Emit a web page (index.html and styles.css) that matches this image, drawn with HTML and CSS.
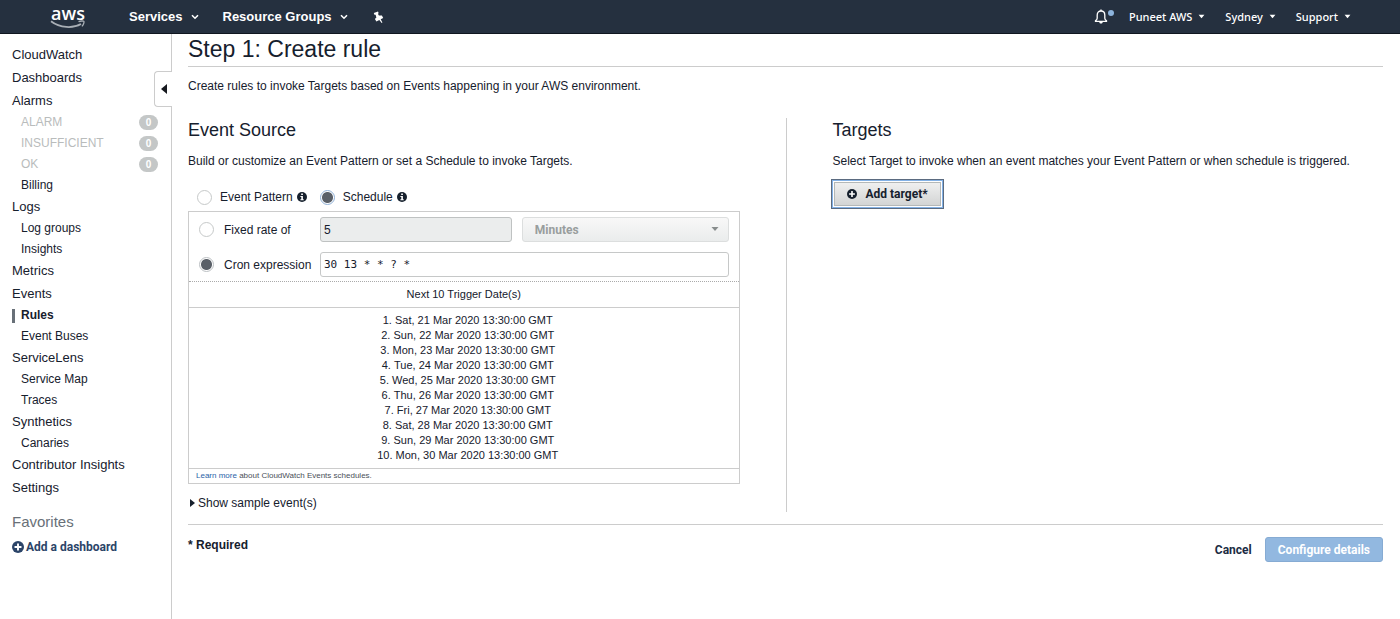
FILE: index.html
```html
<!DOCTYPE html>
<html lang="en">
<head>
<meta charset="utf-8">
<title>CloudWatch - Create rule</title>
<link rel="stylesheet" href="styles.css">
</head>
<body>
<svg class="sprite" aria-hidden="true">
  <symbol id="chevron" viewBox="0 0 8 6"><path d="M1 1.2l3 3 3-3" fill="none" stroke="currentColor" stroke-width="1.6"/></symbol>
  <symbol id="caret" viewBox="0 0 8 6"><path d="M.5 1h7L4 5z" fill="currentColor"/></symbol>
  <symbol id="info" viewBox="0 0 10 10"><circle cx="5" cy="5" r="5" fill="currentColor"/><path d="M4.2 1.5h1.7v1.5H4.2zM3.4 4h2.5v3.2h.8v1.1H3.4V7.2h.9V5h-.9z" fill="#fff"/></symbol>
  <symbol id="plus" viewBox="0 0 10 10"><circle cx="5" cy="5" r="5" fill="currentColor"/><path d="M4.2 2.1h1.6v2.1h2.1v1.6H5.8v2.1H4.2V5.8H2.1V4.2h2.1z" fill="#fff"/></symbol>
</svg>
<header class="topbar">
  <a class="logo" href="#" aria-label="AWS home">
    <span class="logo-text">aws</span>
    <svg class="logo-smile" viewBox="0 0 36 9"><path d="M1 1.200C10 8.200 23 8.600 31 4" fill="none" stroke="#a9afb6" stroke-width="1.800"/><path d="M28.500 1.700c2-.9 5-.9 5.400-.3s-.3 3.300-2 5" fill="none" stroke="#a9afb6" stroke-width="1.300"/></svg>
  </a>
  <nav class="menu">
    <button class="menu-item" type="button">Services <svg class="chevron"><use href="#chevron"/></svg></button>
    <button class="menu-item" type="button">Resource Groups <svg class="chevron"><use href="#chevron"/></svg></button>
    <button class="menu-item" type="button" aria-label="Pin shortcuts"><svg class="pin" viewBox="0 0 12 12"><path d="M1.800 2L6 .4l.7 1.800-.8.5 1 1.800 3-.1 1.300 2.600-2.500 1.200 1.700 3.400-.7.300-2.400-2.900-2.900 1.600L2.900 8l1.500-1.500-.8-2.800-1.200.1z" fill="#fff"/></svg></button>
  </nav>
  <nav class="account">
    <button class="bell" type="button" aria-label="Notifications"><svg class="bell-icon" viewBox="0 0 14 16"><path d="M7 2c2.500 0 3.800 1.800 3.800 4v3.200c0 1 .7 1.700 1.700 2.600v.6h-11v-.6c1-.9 1.700-1.600 1.700-2.600V6C3.200 3.800 4.500 2 7 2z" fill="none" stroke="#fff" stroke-width="1.300"/><path d="M6.300.6h1.400V2H6.300zM5.300 13h3.400c0 2-3.400 2-3.400 0z" fill="#fff"/></svg><span class="bell-dot"></span></button>
    <button class="account-item" type="button">Puneet AWS <svg class="caret"><use href="#caret"/></svg></button>
    <button class="account-item" type="button">Sydney <svg class="caret"><use href="#caret"/></svg></button>
    <button class="account-item" type="button">Support <svg class="caret"><use href="#caret"/></svg></button>
  </nav>
</header>
<div class="layout">
  <aside class="sidebar">
    <button class="collapse" type="button" aria-label="Collapse navigation"><svg class="collapse-icon" viewBox="0 0 6 10"><path d="M6 0v10L0 5z" fill="#16191f"/></svg></button>
    <ul class="nav">
      <li><a href="#">CloudWatch</a></li>
      <li><a href="#">Dashboards</a></li>
      <li><a href="#">Alarms</a>
        <ul class="subnav">
          <li class="muted"><a href="#">ALARM</a><span class="badge">0</span></li>
          <li class="muted"><a href="#">INSUFFICIENT</a><span class="badge">0</span></li>
          <li class="muted"><a href="#">OK</a><span class="badge">0</span></li>
          <li><a href="#">Billing</a></li>
        </ul></li>
      <li><a href="#">Logs</a>
        <ul class="subnav">
          <li><a href="#">Log groups</a></li>
          <li><a href="#">Insights</a></li>
        </ul></li>
      <li><a href="#">Metrics</a></li>
      <li><a href="#">Events</a>
        <ul class="subnav">
          <li class="current"><a href="#" aria-current="page">Rules</a></li>
          <li><a href="#">Event Buses</a></li>
        </ul></li>
      <li><a href="#">ServiceLens</a>
        <ul class="subnav">
          <li><a href="#">Service Map</a></li>
          <li><a href="#">Traces</a></li>
        </ul></li>
      <li><a href="#">Synthetics</a>
        <ul class="subnav">
          <li><a href="#">Canaries</a></li>
        </ul></li>
      <li><a href="#">Contributor Insights</a></li>
      <li><a href="#">Settings</a></li>
    </ul>
    <h2 class="favorites">Favorites</h2>
    <a class="add-dashboard" href="#"><svg class="plus"><use href="#plus"/></svg>Add a dashboard</a>
  </aside>
  <main class="main">
    <h1>Step 1: Create rule</h1>
    <p class="intro">Create rules to invoke Targets based on Events happening in your AWS environment.</p>
    <div class="columns">
      <section class="source">
        <h2>Event Source</h2>
        <p class="lead">Build or customize an Event Pattern or set a Schedule to invoke Targets.</p>
        <div class="modes">
          <label class="choice"><input type="radio" name="mode">Event Pattern <svg class="info"><use href="#info"/></svg></label>
          <label class="choice"><input class="focused" type="radio" name="mode" checked>Schedule <svg class="info"><use href="#info"/></svg></label>
        </div>
        <div class="schedule">
          <div class="fields">
            <label class="choice"><input type="radio" name="kind">Fixed rate of</label>
            <input class="field" type="text" value="5" aria-label="Rate" disabled>
            <div class="select-wrap">
              <select class="unit" aria-label="Rate unit" disabled><option>Minutes</option></select>
              <svg class="unit-caret"><use href="#caret"/></svg>
            </div>
            <label class="choice"><input type="radio" name="kind" checked>Cron expression</label>
            <input class="field cron" type="text" value="30 13 * * ? *" aria-label="Cron expression value">
          </div>
          <h3 class="dates-title">Next 10 Trigger Date(s)</h3>
          <ol class="dates">
            <li>Sat, 21 Mar 2020 13:30:00 GMT</li>
            <li>Sun, 22 Mar 2020 13:30:00 GMT</li>
            <li>Mon, 23 Mar 2020 13:30:00 GMT</li>
            <li>Tue, 24 Mar 2020 13:30:00 GMT</li>
            <li>Wed, 25 Mar 2020 13:30:00 GMT</li>
            <li>Thu, 26 Mar 2020 13:30:00 GMT</li>
            <li>Fri, 27 Mar 2020 13:30:00 GMT</li>
            <li>Sat, 28 Mar 2020 13:30:00 GMT</li>
            <li>Sun, 29 Mar 2020 13:30:00 GMT</li>
            <li>Mon, 30 Mar 2020 13:30:00 GMT</li>
          </ol>
          <p class="learn"><a href="#">Learn more</a> about CloudWatch Events schedules.</p>
        </div>
        <button class="sample" type="button"><svg class="sample-arrow" viewBox="0 0 5 8"><path d="M0 0l5 4-5 4z" fill="currentColor"/></svg>Show sample event(s)</button>
      </section>
      <section class="targets">
        <h2>Targets</h2>
        <p class="lead">Select Target to invoke when an event matches your Event Pattern or when schedule is triggered.</p>
        <button class="add-target" type="button"><svg class="plus"><use href="#plus"/></svg>Add target*</button>
      </section>
    </div>
    <footer class="footer">
      <span class="required">* Required</span>
      <div class="actions">
        <a class="cancel" href="#">Cancel</a>
        <button class="configure" type="button">Configure details</button>
      </div>
    </footer>
  </main>
</div>
</body>
</html>
```
FILE: styles.css
```css
* { box-sizing: border-box; }
body {
  margin: 0;
  min-height: 100vh;
  display: flex;
  flex-direction: column;
  background: #fff;
  color: #16202d;
  font: 12px/16px "Liberation Sans", Arial, sans-serif;
}
h1, h2, h3, p, ul, ol { margin: 0; padding: 0; font-weight: normal; }
ul { list-style: none; }
a { color: inherit; text-decoration: none; }
button { margin: 0; padding: 0; border: 0; background: none; color: inherit; font: inherit; }
svg { flex: none; }
.sprite { display: none; }

/* Top bar */
.topbar {
  display: flex;
  align-items: center;
  height: 34px;
  padding: 0 49px 0 50px;
  background: #25303f;
  border-bottom: 1px solid #10161f;
  color: #fff;
}
.logo { display: flex; flex-direction: column; align-items: center; width: 36px; margin-right: 43px; }
.logo-text { font: 600 18px/18px "Open Sans", sans-serif; }
.logo-smile { width: 36px; height: 9px; margin-top: -2px; }
.menu { display: flex; align-items: center; gap: 24px; flex: 1; }
.menu-item { display: flex; align-items: center; gap: 8px; font-weight: bold; font-size: 13px; line-height: 18px; }
.chevron { width: 8px; height: 6px; }
.pin { width: 12px; height: 12px; }
.account { display: flex; align-items: center; gap: 20px; font: 500 11px/16px "Noto Sans", Verdana, sans-serif; }
.account-item { display: flex; align-items: center; gap: 6px; }
.caret { width: 7px; height: 5px; }
.bell { display: flex; margin-right: -5px; }
.bell-icon { width: 14px; height: 16px; }
.bell-dot { width: 6px; height: 6px; margin-top: 1px; border-radius: 50%; background: #8db4dd; }

/* Sidebar */
.layout { display: flex; flex: 1; }
.sidebar { position: relative; flex: none; width: 172px; padding: 10px 13px 10px 12px; border-right: 1px solid #ccc; }
.collapse {
  position: absolute;
  top: 37px;
  right: -1px;
  display: flex;
  align-items: center;
  justify-content: center;
  width: 18px;
  height: 36px;
  border: 1px solid #ccc;
  border-right: 0;
  border-radius: 4px 0 0 4px;
  background: #fff;
}
.collapse-icon { width: 6px; height: 10px; }
.nav { font-size: 13px; line-height: 22px; }
.nav > li { min-height: 23px; }
.nav > li > a { display: block; }
.subnav { font-size: 12px; line-height: 21px; }
.subnav li { display: flex; align-items: center; justify-content: space-between; height: 21px; padding-left: 9px; }
.subnav .muted { color: #b9bcbc; }
.subnav .current { font-weight: bold; }
.current::before { content: ""; position: absolute; left: 12px; width: 3px; height: 14px; background: #687078; }
.badge { width: 19px; height: 15px; border-radius: 8px; background: #c4c7c7; color: #fff; font: bold 10px/15px "Liberation Sans", Arial, sans-serif; text-align: center; }
.favorites { margin-top: 12px; color: #687078; font-size: 15px; line-height: 20px; }
.add-dashboard { display: flex; align-items: center; gap: 2px; margin-top: 7px; color: #2b4468; font: bold 12px/16px Roboto, sans-serif; }
.plus { width: 12px; height: 12px; }

/* Main */
.main { flex: 1; min-width: 0; padding: 0 17px 0 16px; }
h1 { height: 33px; border-bottom: 1px solid #ccc; font-size: 23px; line-height: 30px; }
.intro { margin: 11px 0 24px; }
.columns { display: grid; grid-template-columns: 1fr 1fr; min-height: 394px; margin-bottom: 12px; }
.source { padding-right: 46px; }
.targets { padding-left: 46px; border-left: 1px solid #ccc; }
.columns h2 { font-size: 18px; line-height: 24px; }
.lead { margin-top: 11px; }
.modes { display: flex; gap: 13px; margin: 20px 0 6px 9px; }
.choice { display: flex; align-items: center; gap: 10px; }
.modes .choice { gap: 4px; }
.modes .choice input { margin-right: 4px; }
.info { width: 10px; height: 10px; }
input[type="radio"] { appearance: none; width: 15px; height: 15px; margin: 0; border: 1px solid #c6c9c9; border-radius: 50%; background: #fff; }
input[type="radio"]:checked { background: radial-gradient(circle, #5a6068 5px, #fff 6px); border-color: #bcc0c3; }
input[type="radio"].focused:checked { border-color: #8fb0d6; }
.schedule { border: 1px solid #ccc; }
.fields {
  display: grid;
  grid-template-columns: 121px 192fr 217fr;
  gap: 10px 0;
  padding: 5px 10px 4px;
  border-bottom: 1px dotted #aaa;
}
.field { width: 100%; min-width: 0; height: 25px; padding: 0 3px; border: 1px solid #c6c8c8; border-radius: 3px; color: #16202d; font: 12px/16px "Liberation Sans", Arial, sans-serif; }
.field:disabled { background: #ebeded; border-color: #bfc2c2; }
.cron { grid-column: 2 / 4; font: 11px/16px "DejaVu Sans Mono", monospace; }
.select-wrap { position: relative; margin-left: 10px; }
.unit { appearance: none; width: 100%; height: 25px; padding: 0 12px; border: 1px solid #dcdede; border-radius: 3px; background: linear-gradient(#f8f8f8, #eaecec); color: #999e9e; opacity: 1; font: bold 12px/16px Roboto, sans-serif; }
.unit-caret { position: absolute; right: 10px; top: 9px; width: 8px; height: 6px; color: #888d8d; }
.dates-title { border-bottom: 1px solid #ccc; font-size: 11px; line-height: 25px; text-align: center; }
.dates { list-style: decimal inside; padding: 5px 0 5px 8px; font-size: 11px; line-height: 15px; text-align: center; }
.learn { padding: 0 7px; border-top: 1px solid #ccc; color: #4a5058; font-size: 8px; line-height: 14px; }
.learn a { color: #2a63a8; }
.sample { display: flex; align-items: center; gap: 3px; margin: 11px 0 0 2px; }
.sample-arrow { width: 5px; height: 8px; }
.add-target {
  display: flex;
  align-items: center;
  gap: 9px;
  height: 30px;
  margin: 10px 0 0 -2px;
  padding: 0 15px;
  border: 1px solid #5b6b80;
  background: linear-gradient(#f3f3f3, #cfd1d1);
  box-shadow: inset 0 0 0 1px #84b2e6, inset 0 0 0 2px #fff, inset 0 0 0 3px #b4b8b8;
  font: bold 12px/16px Roboto, sans-serif;
}
.add-target .plus { width: 10px; height: 10px; }
.footer { display: flex; align-items: flex-start; justify-content: space-between; padding-top: 12px; border-top: 1px solid #ccc; }
.required { font-weight: bold; }
.actions { display: flex; align-items: center; gap: 13px; font: bold 12px/16px Roboto, sans-serif; }
.cancel { color: #1b2c44; }
.configure { height: 25px; padding: 0 12px; border: 1px solid #86abd3; border-radius: 3px; background: #92b8e0; color: #fff; }
```
